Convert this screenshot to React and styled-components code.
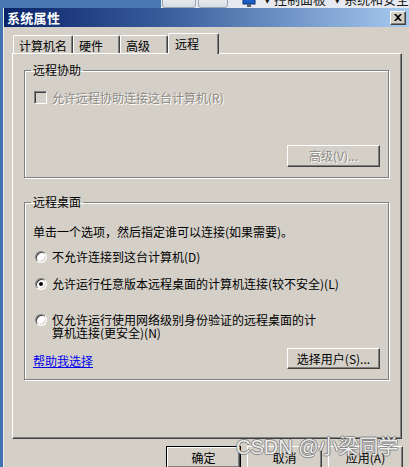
import React from 'react'
import styled, { createGlobalStyle, css } from 'styled-components'

const GlobalStyle = createGlobalStyle`
  html, body {
    margin:0;
    padding:0;
  }
  body {
    background:#3f72ae;
    font-family:"Noto Sans CJK SC", "DejaVu Sans", sans-serif;
    font-size:12px;
    color:#000;
  }
`

const ui = `"Noto Sans CJK SC", "Liberation Sans", sans-serif`

const Screen = styled.div`
  position:relative;
  width:409px;
  height:467px;
  overflow:hidden;
  display:flex;
  flex-direction:column;
  background:#3f72ae;
`

const TopStrip = styled.div`
  height:8px;
  flex-shrink:0;
  display:flex;
  overflow:hidden;
`

const Desktop = styled.div`
  width:163px;
  background:#4a78b2;
`

const Explorer = styled.div`
  flex:1;
  display:flex;
  align-items:flex-end;
  background:#e6eaf0;
  padding-left:1px;
`

const NavButton = styled.div`
  width:${p => p.$w}px;
  height:16px;
  margin-right:2px;
  border:1px solid #9aa4b2;
  border-radius:3px;
  background:linear-gradient(#f4f6f8, #d8dde4);
  box-sizing:border-box;
`

const Crumb = styled.span`
  font:13px/16px ${ui};
  color:#1a1a1a;
  white-space:nowrap;
  margin-left:${p => p.$ml || 0}px;
  margin-bottom:1px;
`

const Window = styled.div`
  flex:1;
  margin-left:3px;
  display:flex;
  flex-direction:column;
  background:#d4d0c8;
  border-left:1px solid #ece9e2;
`

const TitleBar = styled.div`
  height:19px;
  flex-shrink:0;
  display:flex;
  align-items:center;
  justify-content:space-between;
  padding:0 3px 0 3px;
  background:linear-gradient(90deg, #0a246a 0%, #3a5d9c 40%, #a6caf0 100%);
`

const Title = styled.span`
  font:bold 13px/15px ${ui};
  color:#fff;
  letter-spacing:0.3px;
`

const CloseButton = styled.div`
  width:16px;
  height:14px;
  box-sizing:border-box;
  display:flex;
  align-items:center;
  justify-content:center;
  background:#d4d0c8;
  border:1px solid;
  border-color:#fff #404040 #404040 #fff;
  box-shadow:inset -1px -1px #808080;
`

const Body = styled.div`
  flex:1;
  display:flex;
  flex-direction:column;
  padding:6px 6px 0 8px;
`

const TabRow = styled.div`
  height:20px;
  display:flex;
  align-items:flex-end;
  margin-left:1px;
`

const Tab = styled.div`
  width:${p => p.$w}px;
  height:18px;
  box-sizing:border-box;
  padding:3px 0 0 5px;
  font:12px/14px ${ui};
  background:#d4d0c8;
  border-top:1px solid #fff;
  border-left:1px solid #fff;
  border-right:1px solid #404040;
  border-radius:2px 2px 0 0;
  box-shadow:inset -1px 0 #808080;
  ${p => p.$active && css`
    position:relative;
    z-index:1;
    height:21px;
    margin-bottom:-1px;
    padding:3px 0 0 6px;
  `}
`

const Panel = styled.div`
  width:390px;
  height:386px;
  box-sizing:border-box;
  display:flex;
  flex-direction:column;
  padding:10px 12px 0 11px;
  border:1px solid;
  border-color:#fff #404040 #404040 #fff;
  box-shadow:inset -1px -1px #808080;
`

const Group = styled.fieldset`
  width:365px;
  box-sizing:border-box;
  margin:${p => p.$mt || 0}px 0 0 0;
  padding:0 8px 10px 8px;
  min-width:0;
  display:flex;
  flex-direction:column;
  border:1px solid #808080;
  box-shadow:inset 1px 1px #fff, 1px 1px #fff;
`

const Legend = styled.legend`
  font:12px/12px ${ui};
  padding:0 2px;
  margin-left:-2px;
`

const Text = styled.div`
  font:12px/14px ${ui};
  margin-top:${p => p.$mt || 0}px;
`

const Option = styled.label`
  display:flex;
  align-items:flex-start;
  gap:5px;
  margin-top:${p => p.$mt || 0}px;
  margin-left:${p => p.$ml || 0}px;
  font:12px/${p => p.$lh || 14}px ${ui};
  color:${p => (p.$disabled ? '#8d8a84' : '#000')};
  ${p => p.$disabled && css`text-shadow:1px 1px #fff;`}
`

const OptionText = styled.span`
  max-width:${p => p.$max ? `${p.$max}px` : 'none'};
`

const CheckBox = styled.span`
  width:13px;
  height:13px;
  flex-shrink:0;
  box-sizing:border-box;
  background:${p => (p.$disabled ? '#d4d0c8' : '#fff')};
  border:1px solid;
  border-color:#808080 #fff #fff #808080;
  box-shadow:inset 1px 1px #404040, inset -1px -1px #d4d0c8;
`

const Radio = styled.span`
  width:12px;
  height:12px;
  flex-shrink:0;
  margin-top:1px;
  box-sizing:border-box;
  border-radius:50%;
  background:#fff;
  border:1px solid;
  border-color:#808080 #fff #fff #808080;
  box-shadow:inset 1px 1px #404040, inset -1px -1px #d4d0c8;
  display:flex;
  align-items:center;
  justify-content:center;
  &::after {
    content:'';
    width:4px;
    height:4px;
    border-radius:50%;
    background:${p => (p.$checked ? '#000' : 'transparent')};
  }
`

const Button = styled.button`
  width:${p => p.$w}px;
  height:${p => p.$h}px;
  padding:0;
  flex-shrink:0;
  box-sizing:border-box;
  font:12px/14px ${ui};
  color:#000;
  background:#d4d0c8;
  border:1px solid;
  border-color:#fff #404040 #404040 #fff;
  box-shadow:inset -1px -1px #808080;
  margin-top:${p => p.$mt || 0}px;
  ${p => p.$right && css`align-self:flex-end;`}
  ${p => p.$disabled && css`
    color:#8d8a84;
    text-shadow:1px 1px #fff;
  `}
  ${p => p.$default && css`
    border-color:#000;
    box-shadow:inset 1px 1px #fff, inset -1px -1px #404040, inset -2px -2px #808080;
  `}
`

const Footer = styled.div`
  display:flex;
  justify-content:space-between;
  align-items:flex-end;
  margin-top:9px;
`

const Link = styled.a`
  font:12px/14px ${ui};
  color:#0000ee;
  text-decoration:underline;
  margin-bottom:1px;
`

const DialogButtons = styled.div`
  display:flex;
  justify-content:flex-end;
  gap:6px;
  margin-top:7px;
`

const Watermark = styled.div`
  position:absolute;
  left:236px;
  top:435px;
  font:20px/24px "Liberation Sans", "Noto Sans CJK SC", sans-serif;
  color:rgba(255,255,255,0.88);
  white-space:nowrap;
  text-shadow:1px 0 rgba(110,110,110,0.7), -1px 0 rgba(110,110,110,0.7), 0 1px rgba(110,110,110,0.7), 0 -1px rgba(110,110,110,0.7);
  pointer-events:none;
`

const CloseIcon = () => (
  <svg width="8" height="7" viewBox="0 0 8 7">
    <path d="M0 0h2l2 2 2-2h2L5 3.5 8 7H6L4 5 2 7H0l3-3.5z" fill="#000" />
  </svg>
)

const MonitorIcon = () => (
  <svg width="14" height="14" viewBox="0 0 14 14" style={{ marginLeft: 12, marginRight: 8 }}>
    <rect x="1" y="1" width="12" height="9" fill="#1c5fc4" stroke="#0a2f78" />
    <rect x="5" y="10" width="4" height="3" fill="#5a6270" />
  </svg>
)

export default function App() {
  return (
    <Screen>
      <GlobalStyle />
      <TopStrip>
        <Desktop />
        <Explorer>
          <NavButton $w={34} />
          <NavButton $w={30} />
          <MonitorIcon />
          <Crumb>▾ 控制面板</Crumb>
          <Crumb $ml={8}>▾ 系统和安全</Crumb>
        </Explorer>
      </TopStrip>

      <Window>
        <TitleBar>
          <Title>系统属性</Title>
          <CloseButton>
            <CloseIcon />
          </CloseButton>
        </TitleBar>

        <Body>
          <TabRow>
            <Tab $w={60}>计算机名</Tab>
            <Tab $w={47}>硬件</Tab>
            <Tab $w={48}>高级</Tab>
            <Tab $w={51} $active>远程</Tab>
          </TabRow>

          <Panel>
            <Group>
              <Legend>远程协助</Legend>
              <Option $mt={15} $ml={1} $disabled>
                <CheckBox $disabled />
                <OptionText>允许远程协助连接这台计算机(R)</OptionText>
              </Option>
              <Button $w={93} $h={22} $mt={40} $right $disabled>高级(V)...</Button>
            </Group>

            <Group $mt={18}>
              <Legend>远程桌面</Legend>
              <Text $mt={17}>单击一个选项，然后指定谁可以连接(如果需要)。</Text>
              <Option $mt={11} $ml={2}>
                <Radio />
                <OptionText>不允许连接到这台计算机(D)</OptionText>
              </Option>
              <Option $mt={13} $ml={2}>
                <Radio $checked />
                <OptionText>允许运行任意版本远程桌面的计算机连接(较不安全)(L)</OptionText>
              </Option>
              <Option $mt={22} $ml={2} $lh={13}>
                <Radio />
                <OptionText $max={266}>仅允许运行使用网络级别身份验证的远程桌面的计算机连接(更安全)(N)</OptionText>
              </Option>
              <Footer>
                <Link>帮助我选择</Link>
                <Button $w={93} $h={21}>选择用户(S)...</Button>
              </Footer>
            </Group>
          </Panel>

          <DialogButtons>
            <Button $w={75} $h={23} $default>确定</Button>
            <Button $w={75} $h={23}>取消</Button>
            <Button $w={75} $h={23}>应用(A)</Button>
          </DialogButtons>
        </Body>
      </Window>

      <Watermark>CSDN @小梁同学</Watermark>
    </Screen>
  )
}
